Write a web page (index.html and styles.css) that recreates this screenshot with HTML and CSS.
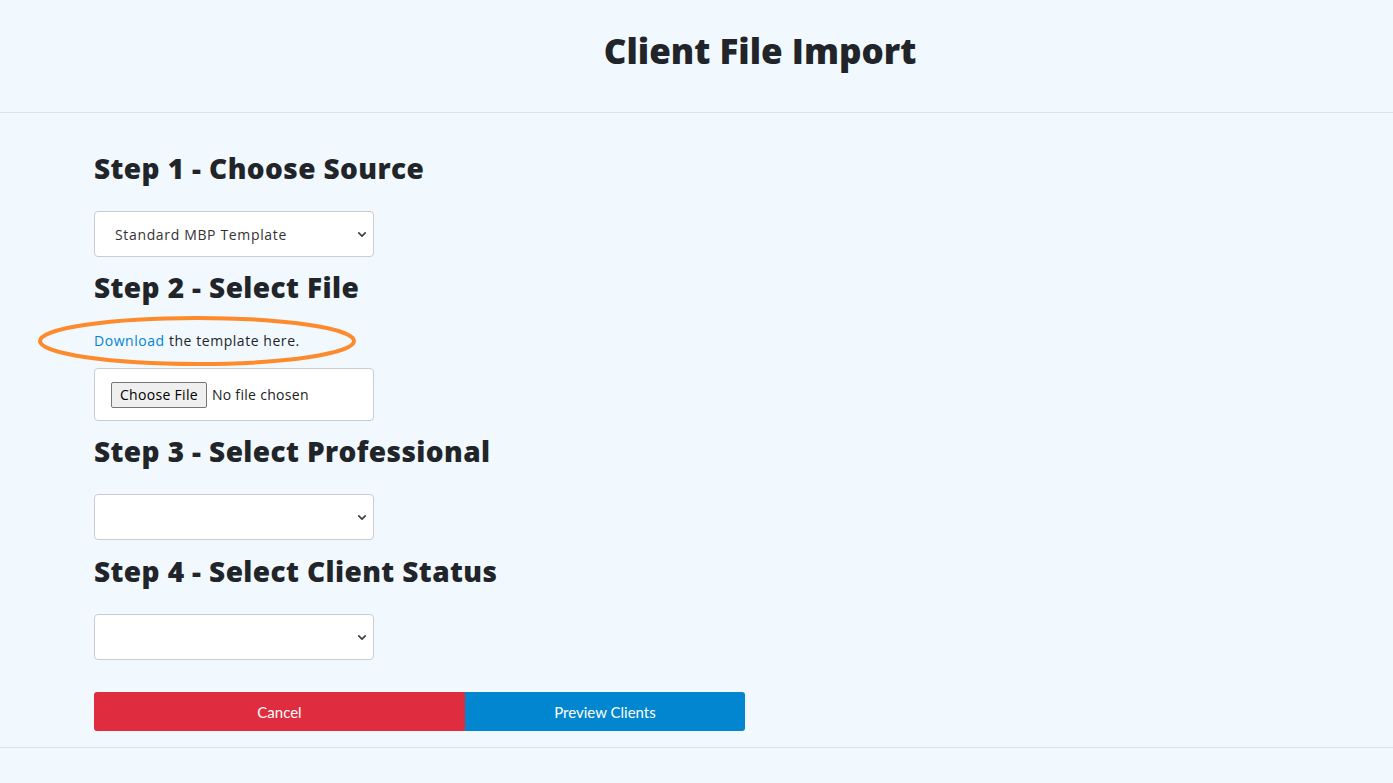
FILE: index.html
```html
<!DOCTYPE html>
<html lang="en">
<head>
<meta charset="utf-8">
<title>Client File Import</title>
<link rel="stylesheet" href="styles.css">
</head>
<body>
<header class="page-header">
  <h1 class="page-title">Client File Import</h1>
</header>
<main class="import-form">
  <h2 class="step step-first">Step 1 - Choose Source</h2>
  <div class="select-wrap select-first">
    <select class="field-select">
      <option>Standard MBP Template</option>
    </select>
    <svg class="chevron" viewBox="0 0 10 6" width="8" height="5"><path d="M1 1l4 4 4-4" fill="none" stroke="#3a3f44" stroke-width="2" stroke-linecap="round" stroke-linejoin="round"/></svg>
  </div>
  <h2 class="step">Step 2 - Select File</h2>
  <p class="template-note"><a href="#" class="link">Download</a> the template here.
    <svg class="annotation" viewBox="0 0 324 56" width="324" height="56"><ellipse cx="162" cy="28" rx="157" ry="23" fill="none" stroke="#fd8b2b" stroke-width="4"/></svg>
  </p>
  <div class="file-box">
    <span class="file-btn">Choose File</span><span class="file-name">No file chosen</span>
  </div>
  <h2 class="step">Step 3 - Select Professional</h2>
  <div class="select-wrap">
    <select class="field-select"><option></option></select>
    <svg class="chevron" viewBox="0 0 10 6" width="8" height="5"><path d="M1 1l4 4 4-4" fill="none" stroke="#3a3f44" stroke-width="2" stroke-linecap="round" stroke-linejoin="round"/></svg>
  </div>
  <h2 class="step step-last">Step 4 - Select Client Status</h2>
  <div class="select-wrap">
    <select class="field-select"><option></option></select>
    <svg class="chevron" viewBox="0 0 10 6" width="8" height="5"><path d="M1 1l4 4 4-4" fill="none" stroke="#3a3f44" stroke-width="2" stroke-linecap="round" stroke-linejoin="round"/></svg>
  </div>
  <div class="actions">
    <button class="btn btn-cancel">Cancel</button>
    <button class="btn btn-preview">Preview Clients</button>
  </div>
</main>
<div class="page-footer"></div>
</body>
</html>
```
FILE: styles.css
```css
html, body {
  margin: 0;
  padding: 0;
  background: #f1f8fe;
  color: #212529;
  font-family: "Open Sans", "Liberation Sans", sans-serif;
}
.page-header {
  height: 113px;
  box-sizing: border-box;
  padding: 29px 0 0 127px;
  border-bottom: 1px solid #dde3e8;
  text-align: center;
}
.page-title {
  margin: 0;
  font-size: 35px;
  line-height: 44px;
  font-weight: 800;
  letter-spacing: 0px;
}
.import-form {
  display: flex;
  flex-direction: column;
  align-items: flex-start;
  padding: 38px 0 16px 94px;
  border-bottom: 1px solid #dde3e8;
}
.step {
  margin: 13px 0 0 0;
  font-size: 28px;
  line-height: 34px;
  font-weight: 800;
  letter-spacing: 0.4px;
}
.step-first { margin-top: 0; }
.step-last { margin-top: 14px; }
.select-wrap {
  position: relative;
  margin-top: 26px;
  width: 280px;
  height: 46px;
}
.select-first { margin-top: 26px; }
.field-select {
  appearance: none;
  -webkit-appearance: none;
  width: 280px;
  height: 46px;
  box-sizing: border-box;
  background: #fff;
  border: 1px solid #c9cdd1;
  border-radius: 4px;
  padding: 0 20px;
  font-family: "Open Sans", "Liberation Sans", sans-serif;
  font-size: 14px;
  letter-spacing: 0.65px;
  color: #333;
}
.chevron {
  position: absolute;
  right: 8px;
  top: 21px;
  pointer-events: none;
}
.template-note {
  position: relative;
  margin: 27px 0 0 0;
  font-size: 14px;
  line-height: 20px;
  letter-spacing: 0.55px;
}
.link {
  color: #0284d0;
  text-decoration: none;
}
.annotation {
  position: absolute;
  left: -59px;
  top: -18px;
  pointer-events: none;
}
.file-box {
  margin-top: 17px;
  width: 280px;
  height: 53px;
  box-sizing: border-box;
  background: #fff;
  border: 1px solid #c9cdd1;
  border-radius: 4px;
  display: flex;
  align-items: center;
  padding: 0 0 0 16px;
  font-size: 14px;
  letter-spacing: 0.3px;
}
.file-btn {
  box-sizing: border-box;
  height: 26px;
  padding: 0 8px;
  display: flex;
  align-items: center;
  background: #efefef;
  border: 1px solid #767676;
  border-radius: 2px;
  color: #000;
}
.file-name {
  margin-left: 5px;
  color: #222;
}
.actions {
  margin-top: 32px;
  display: flex;
}
.btn {
  height: 39px;
  border: none;
  color: #fff;
  font-family: "Lato", "Open Sans", sans-serif;
  font-size: 15px;
  cursor: pointer;
}
.btn-cancel {
  width: 371px;
  background: #e02c3f;
  border-radius: 3px 0 0 3px;
}
.btn-preview {
  width: 280px;
  background: #0286cf;
  border-radius: 0 3px 3px 0;
}
.page-footer {
  height: 35px;
}
```
